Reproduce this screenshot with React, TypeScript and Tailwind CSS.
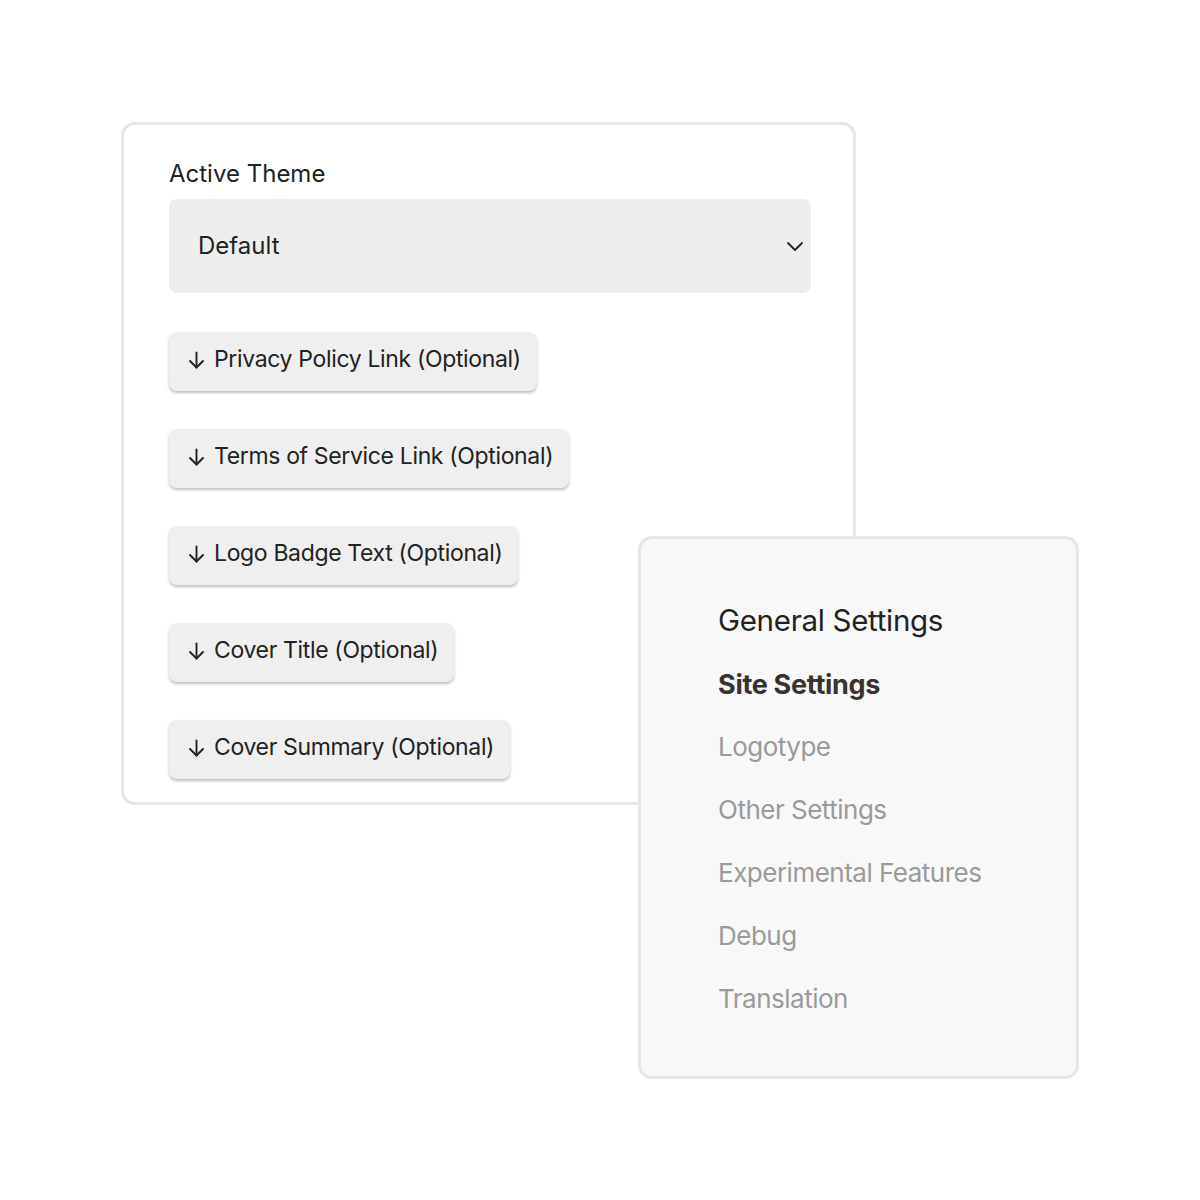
import React from "react";

const fields = [
  "Privacy Policy Link (Optional)",
  "Terms of Service Link (Optional)",
  "Logo Badge Text (Optional)",
  "Cover Title (Optional)",
  "Cover Summary (Optional)",
];

const nav = [
  { label: "Logotype" },
  { label: "Other Settings" },
  { label: "Experimental Features" },
  { label: "Debug" },
  { label: "Translation" },
];

function ArrowDown() {
  return (
    <svg width="17" height="18" viewBox="0 0 17 18" fill="none" stroke="#222" strokeWidth="1.9" strokeLinecap="round" strokeLinejoin="round" className="-translate-y-[2px]">
      <path d="M8.5 1.5v15" />
      <path d="M2 10l6.5 6.5L15 10" />
    </svg>
  );
}

function Chevron() {
  return (
    <svg width="18" height="12" viewBox="0 0 18 12" fill="none" stroke="#222" strokeWidth="1.8" strokeLinecap="round" strokeLinejoin="round">
      <path d="M2 3l7 7 7-7" />
    </svg>
  );
}

export default function App() {
  return (
    <div
      className="relative w-[1200px] h-[1200px] bg-white"
      style={{ fontFamily: "Inter, 'Noto Sans', sans-serif" }}
    >
      <div className="pt-[122px] pl-[121px]">
        <div className="w-[735px] h-[683px] rounded-[14px] border-[3px] border-[#e6e6e6] bg-white pl-[45px] pr-[42px] pt-[33px]">
          <div className="text-[24px] leading-[32px] text-[#222]">Active Theme</div>
          <div className="mt-[9px] h-[94px] rounded-[8px] bg-[#eeeeee] flex items-center justify-between pl-[29px] pr-[7px]">
            <span className="text-[24px] text-[#222]">Default</span>
            <Chevron />
          </div>
          <div className="mt-[39px] flex flex-col items-start gap-[38px]">
            {fields.map((f) => (
              <div
                key={f}
                className="h-[59px] flex items-center gap-[9px] pl-[19px] pr-[16px] rounded-[8px] bg-[#efefef] shadow-[0_2px_3px_rgba(0,0,0,0.25)]"
              >
                <ArrowDown />
                <span className="text-[23px] text-[#222] tracking-[-0.35px] -translate-y-[2px]">{f}</span>
              </div>
            ))}
          </div>
        </div>
      </div>

      <div className="absolute left-[638px] top-[536px] w-[441px] h-[543px] rounded-[14px] border-[3px] border-[#e6e6e6] bg-[#f8f8f8] pl-[77px] pt-[50px]">
        <div className="flex flex-col">
          <div className="h-[63px] flex items-center text-[29.5px] text-[#222] tracking-[-0.3px]">General Settings</div>
          <div className="h-[63px] flex items-center pt-[3px] text-[27px] font-bold text-[#38332e] tracking-[-0.3px]">Site Settings</div>
          {nav.map((n) => (
            <div key={n.label} className="h-[63px] flex items-center text-[26px] text-[#9a9a9a] tracking-[-0.5px]">
              {n.label}
            </div>
          ))}
        </div>
      </div>
    </div>
  );
}
